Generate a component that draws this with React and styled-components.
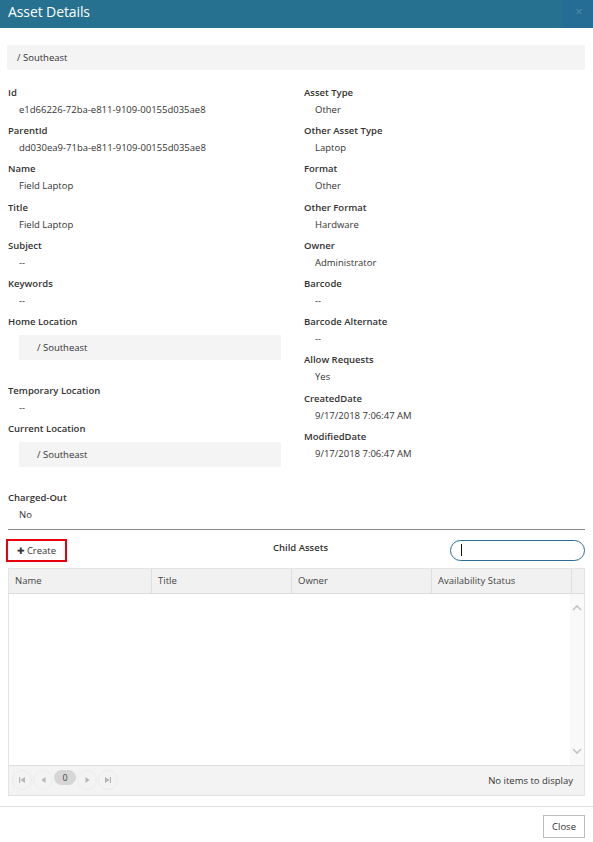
import React from "react";
import styled, { createGlobalStyle } from "styled-components";

const GlobalStyle = createGlobalStyle`
  html, body {
    margin: 0;
    padding: 0;
    background: #ffffff;
  }
  body {
    font-family: "Open Sans", "Noto Sans", sans-serif;
    color: #333333;
  }
`;

const left = [
  { label: "Id", value: "e1d66226-72ba-e811-9109-00155d035ae8" },
  { label: "ParentId", value: "dd030ea9-71ba-e811-9109-00155d035ae8" },
  { label: "Name", value: "Field Laptop" },
  { label: "Title", value: "Field Laptop" },
  { label: "Subject", value: "--" },
  { label: "Keywords", value: "--" },
  { label: "Home Location", value: "/ Southeast", box: true },
  { label: "Temporary Location", value: "--" },
  { label: "Current Location", value: "/ Southeast", box: true },
  { label: "Charged-Out", value: "No" },
];

const right = [
  { label: "Asset Type", value: "Other" },
  { label: "Other Asset Type", value: "Laptop" },
  { label: "Format", value: "Other" },
  { label: "Other Format", value: "Hardware" },
  { label: "Owner", value: "Administrator" },
  { label: "Barcode", value: "--" },
  { label: "Barcode Alternate", value: "--" },
  { label: "Allow Requests", value: "Yes" },
  { label: "CreatedDate", value: "9/17/2018 7:06:47 AM" },
  { label: "ModifiedDate", value: "9/17/2018 7:06:47 AM" },
];

const columns = ["Name", "Title", "Owner", "Availability Status"];

export default function App() {
  return (
    <Dialog>
      <GlobalStyle />
      <TitleBar>
        <h1>Asset Details</h1>
        <CloseX>×</CloseX>
      </TitleBar>
      <Body>
        <Breadcrumb>/ Southeast</Breadcrumb>
        <Fields>
          <Column>
            {left.map((f) => (
              <Field key={f.label} $box={f.box}>
                <Label>{f.label}</Label>
                {f.box ? <LocationBox>{f.value}</LocationBox> : <Value>{f.value}</Value>}
              </Field>
            ))}
          </Column>
          <Column>
            {right.map((f) => (
              <Field key={f.label}>
                <Label>{f.label}</Label>
                <Value>{f.value}</Value>
              </Field>
            ))}
          </Column>
        </Fields>
        <Divider />
        <Toolbar>
          <CreateButton>
            <Plus>✚</Plus>Create
          </CreateButton>
          <ToolbarTitle>Child Assets</ToolbarTitle>
          <Search>
            <Caret />
          </Search>
        </Toolbar>
        <Grid>
          <HeaderRow>
            {columns.map((c) => (
              <HeaderCell key={c}>{c}</HeaderCell>
            ))}
            <HeaderSpacer />
          </HeaderRow>
          <GridContent>
            <Rows />
            <ScrollBar>
              <svg width="10" height="8" viewBox="0 0 10 8">
                <path d="M1 6 L5 2 L9 6" fill="none" stroke="#c4c4c4" strokeWidth="1.6" />
              </svg>
              <svg width="10" height="8" viewBox="0 0 10 8">
                <path d="M1 2 L5 6 L9 2" fill="none" stroke="#c4c4c4" strokeWidth="1.6" />
              </svg>
            </ScrollBar>
          </GridContent>
          <Pager>
            <PagerButtons>
              <PageArrow>
                <svg width="6" height="6" viewBox="0 0 6 6">
                  <rect x="0" y="0" width="1.2" height="6" fill="#b5b5b5" />
                  <path d="M6 0 L1.5 3 L6 6 Z" fill="#b5b5b5" />
                </svg>
              </PageArrow>
              <PageArrow>
                <svg width="5" height="6" viewBox="0 0 5 6">
                  <path d="M4.5 0 L0.5 3 L4.5 6 Z" fill="#b5b5b5" />
                </svg>
              </PageArrow>
              <PageNumber>0</PageNumber>
              <PageArrow>
                <svg width="5" height="6" viewBox="0 0 5 6">
                  <path d="M0.5 0 L4.5 3 L0.5 6 Z" fill="#b5b5b5" />
                </svg>
              </PageArrow>
              <PageArrow>
                <svg width="6" height="6" viewBox="0 0 6 6">
                  <path d="M0 0 L4.5 3 L0 6 Z" fill="#b5b5b5" />
                  <rect x="4.8" y="0" width="1.2" height="6" fill="#b5b5b5" />
                </svg>
              </PageArrow>
            </PagerButtons>
            <PagerInfo>No items to display</PagerInfo>
          </Pager>
        </Grid>
      </Body>
      <Footer>
        <FooterButton>Close</FooterButton>
      </Footer>
    </Dialog>
  );
}

const Dialog = styled.div`
  width: 593px;
  height: 842px;
  display: flex;
  flex-direction: column;
  background: #ffffff;
  overflow: hidden;
`;

const TitleBar = styled.div`
  height: 28px;
  display: flex;
  align-items: center;
  justify-content: space-between;
  background: linear-gradient(to right, #25718f 0, #25718f 95%, #256d94 95%);
  padding: 0 0 0 8px;
  h1 {
    margin: 0;
    font-size: 14px;
    font-weight: 400;
    color: #ffffff;
    letter-spacing: -0.1px;
    margin-top: -5px;
  }
`;

const CloseX = styled.span`
  width: 28px;
  text-align: center;
  color: #4c8dab;
  font-size: 13px;
  margin-top: -6px;
`;

const Body = styled.div`
  padding: 17px 8px 0 8px;
  display: flex;
  flex-direction: column;
`;

const Breadcrumb = styled.div`
  height: 25px;
  margin-left: -1px;
  background: #f4f4f4;
  font-size: 9.5px;
  display: flex;
  align-items: center;
  padding-left: 10px;
  color: #333;
`;

const Fields = styled.div`
  display: grid;
  grid-template-columns: 296px 1fr;
  padding-top: 16px;
`;

const Column = styled.div`
  display: flex;
  flex-direction: column;
`;

const Field = styled.div`
  display: flex;
  flex-direction: column;
  flex-shrink: 0;
  height: ${(p) => (p.$box ? "69px" : "38.2px")};
`;

const Label = styled.div`
  font-size: 9.5px;
  font-weight: 600;
  color: #333;
  line-height: 13px;
`;

const Value = styled.div`
  font-size: 9.5px;
  color: #333;
  padding-left: 11px;
  margin-top: 4px;
  line-height: 13px;
`;

const LocationBox = styled.div`
  margin: 7px 11px 0 11px;
  width: 244px;
  height: 25px;
  background: #f4f4f4;
  font-size: 9.5px;
  display: flex;
  align-items: center;
  padding-left: 18px;
`;

const Divider = styled.div`
  height: 1px;
  background: #8a8a8a;
  margin-top: -1px;
`;

const Toolbar = styled.div`
  display: flex;
  align-items: center;
  justify-content: space-between;
  margin-top: 9px;
  height: 23px;
`;

const CreateButton = styled.button`
  margin-left: -2px;
  width: 61px;
  height: 23px;
  border: 2px solid #e8000b;
  background: #ffffff;
  font-family: "Open Sans", sans-serif;
  font-size: 9.5px;
  color: #333;
  display: flex;
  align-items: center;
  justify-content: center;
  padding: 0;
  gap: 2px;
`;

const Plus = styled.span`
  font-size: 9px;
  color: #333;
`;

const ToolbarTitle = styled.div`
  font-size: 9.5px;
  font-weight: 600;
  color: #333;
  margin-left: 84px;
  margin-top: -6px;
`;

const Search = styled.div`
  box-sizing: border-box;
  width: 135px;
  height: 21px;
  border: 1.5px solid #2a6f8f;
  border-radius: 11px;
  display: flex;
  align-items: center;
  padding-left: 10px;
`;

const Caret = styled.div`
  width: 1px;
  height: 12px;
  background: #111;
`;

const Grid = styled.div`
  margin-top: 6px;
  border: 1px solid #e4e4e4;
  display: flex;
  flex-direction: column;
  height: 226px;
`;

const HeaderRow = styled.div`
  display: grid;
  grid-template-columns: 143px 140px 140px 140px 1fr;
  height: 24px;
  background: #f1f1f1;
  border-bottom: 1px solid #dcdcdc;
`;

const HeaderCell = styled.div`
  font-size: 9.5px;
  color: #444;
  display: flex;
  align-items: center;
  padding-left: 6px;
  border-right: 1px solid #dedede;
`;

const HeaderSpacer = styled.div``;

const GridContent = styled.div`
  flex: 1;
  display: flex;
`;

const Rows = styled.div`
  flex: 1;
`;

const ScrollBar = styled.div`
  width: 14px;
  background: #f9f9f9;
  display: flex;
  flex-direction: column;
  justify-content: space-between;
  align-items: center;
  padding: 10px 0 10px;
`;

const Pager = styled.div`
  height: 29px;
  background: #f3f3f3;
  border-top: 1px solid #dedede;
  display: flex;
  align-items: center;
  justify-content: space-between;
  padding: 0 11px 0 3px;
`;

const PagerButtons = styled.div`
  display: flex;
  align-items: center;
  gap: 1px;
`;

const PageArrow = styled.div`
  width: 18px;
  height: 18px;
  border-radius: 50%;
  border: 1px solid #ececec;
  display: flex;
  align-items: center;
  justify-content: center;
`;

const PageNumber = styled.div`
  width: 22px;
  height: 15px;
  border-radius: 8px;
  background: #d6d6d6;
  font-size: 9px;
  color: #444;
  display: flex;
  align-items: center;
  justify-content: center;
  margin-top: -6px;
`;

const PagerInfo = styled.div`
  font-size: 9.5px;
  color: #333;
`;

const Footer = styled.div`
  margin-top: 10px;
  border-top: 1px solid #e2e2e2;
  display: flex;
  justify-content: flex-end;
  padding: 8px 8px 0 0;
`;

const FooterButton = styled.button`
  width: 42px;
  height: 23px;
  border: 1px solid #bdbdbd;
  background: #ffffff;
  font-family: "Open Sans", sans-serif;
  font-size: 9.5px;
  color: #333;
  padding: 0;
`;
